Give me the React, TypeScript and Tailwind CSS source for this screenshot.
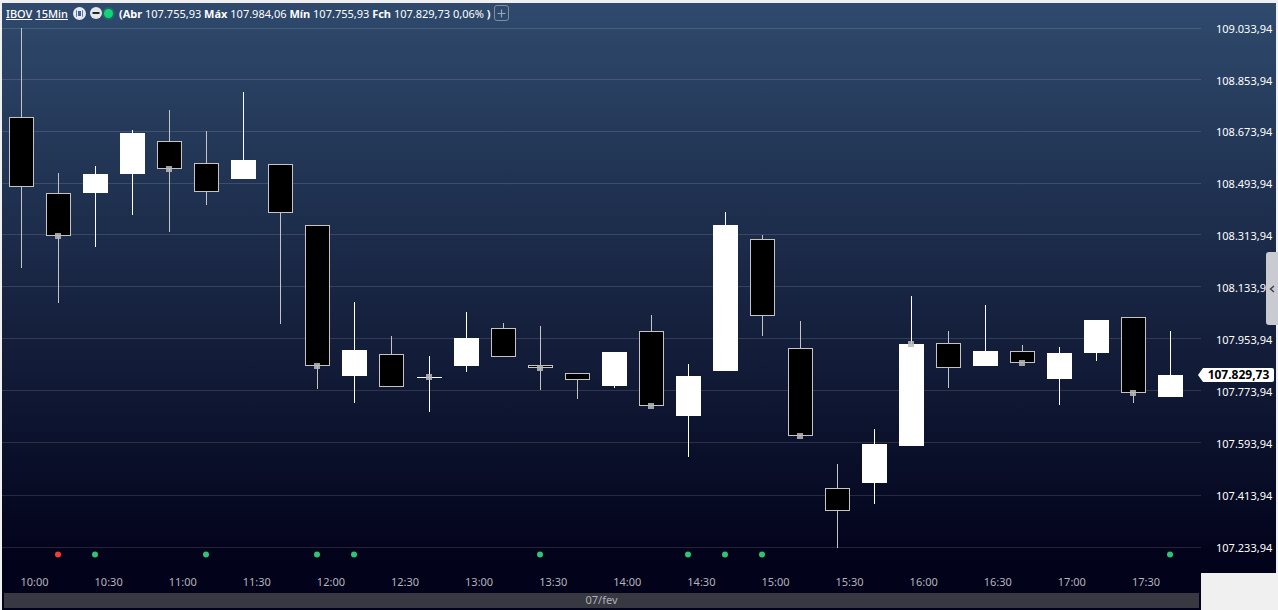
import { Fragment } from 'react'

const font = "font-['Noto_Sans',Arial,sans-serif]"
const chartBg =
  'bg-[linear-gradient(180deg,#2f4a6d_0%,#02021a_92%)] bg-size-[100%_607px] bg-no-repeat'

const priceLabels = [
  '109.033,94',
  '108.853,94',
  '108.673,94',
  '108.493,94',
  '108.313,94',
  '108.133,94',
  '107.953,94',
  '107.773,94',
  '107.593,94',
  '107.413,94',
  '107.233,94',
]

const timeLabels = [
  '10:00', '10:30', '11:00', '11:30', '12:00', '12:30', '13:00', '13:30',
  '14:00', '14:30', '15:00', '15:30', '16:00', '16:30', '17:00', '17:30',
]

const gridLines = [28, 79, 131, 183, 234, 286, 338, 390, 442, 495, 547]

type Candle = {
  x: number
  up: boolean
  top: number
  bottom: number
  high: number
  low: number
  mark?: number
}

// y values are page pixels, the svg viewBox starts at the chart's page offset
const candles: Candle[] = [
  { x: 21.5, up: false, top: 117.5, bottom: 186.5, high: 28, low: 268 },
  { x: 58.5, up: false, top: 193.5, bottom: 235.5, high: 173, low: 303, mark: 233 },
  { x: 95.5, up: true, top: 174, bottom: 193, high: 166, low: 247 },
  { x: 132.5, up: true, top: 133, bottom: 174, high: 130, low: 215 },
  { x: 169.5, up: false, top: 141.5, bottom: 168.5, high: 110, low: 232, mark: 166 },
  { x: 206.5, up: false, top: 163.5, bottom: 191.5, high: 131, low: 205 },
  { x: 243.5, up: true, top: 160, bottom: 179, high: 92, low: 179 },
  { x: 280.5, up: false, top: 164.5, bottom: 212.5, high: 164, low: 324 },
  { x: 317.5, up: false, top: 225.5, bottom: 365.5, high: 225, low: 389, mark: 363 },
  { x: 354.5, up: true, top: 350, bottom: 376, high: 302, low: 403 },
  { x: 391.5, up: false, top: 354.5, bottom: 386.5, high: 336, low: 386 },
  { x: 429.5, up: true, top: 377, bottom: 378, high: 356, low: 412, mark: 374 },
  { x: 466.5, up: true, top: 338, bottom: 366, high: 312, low: 372 },
  { x: 503.5, up: false, top: 328.5, bottom: 356.5, high: 323, low: 356 },
  { x: 540.5, up: false, top: 365.5, bottom: 367.5, high: 326, low: 390, mark: 365 },
  { x: 577.5, up: false, top: 373.5, bottom: 379.5, high: 373, low: 399 },
  { x: 614.5, up: true, top: 352, bottom: 386, high: 352, low: 388 },
  { x: 651.5, up: false, top: 331.5, bottom: 405.5, high: 315, low: 405, mark: 403 },
  { x: 688.5, up: true, top: 376, bottom: 416, high: 364, low: 457 },
  { x: 725.5, up: true, top: 225, bottom: 371, high: 212, low: 371 },
  { x: 762.5, up: false, top: 239.5, bottom: 315.5, high: 235, low: 336 },
  { x: 800.5, up: false, top: 348.5, bottom: 435.5, high: 321, low: 435, mark: 433 },
  { x: 837.5, up: false, top: 488.5, bottom: 510.5, high: 464, low: 548 },
  { x: 874.5, up: true, top: 444, bottom: 483, high: 429, low: 504 },
  { x: 911.5, up: true, top: 344, bottom: 446, high: 296, low: 446, mark: 341 },
  { x: 948.5, up: false, top: 343.5, bottom: 367.5, high: 331, low: 388 },
  { x: 985.5, up: true, top: 351, bottom: 366, high: 305, low: 366 },
  { x: 1022.5, up: false, top: 351.5, bottom: 362.5, high: 345, low: 362, mark: 360 },
  { x: 1059.5, up: true, top: 353, bottom: 379, high: 347, low: 405 },
  { x: 1096.5, up: true, top: 320, bottom: 353, high: 320, low: 361 },
  { x: 1133.5, up: false, top: 317.5, bottom: 392.5, high: 317, low: 403, mark: 390 },
  { x: 1170.5, up: true, top: 375, bottom: 397, high: 331, low: 397 },
]

const signals = [
  { x: 58, color: '#f23c3c' },
  { x: 95, color: '#2fc474' },
  { x: 206, color: '#2fc474' },
  { x: 317, color: '#2fc474' },
  { x: 354, color: '#2fc474' },
  { x: 540, color: '#2fc474' },
  { x: 688, color: '#2fc474' },
  { x: 725, color: '#2fc474' },
  { x: 762, color: '#2fc474' },
  { x: 1170, color: '#2fc474' },
]

function CandleChart() {
  return (
    <svg viewBox="2 3 1199 570" className="block h-[570px] w-[1199px]" shapeRendering="crispEdges">
      {gridLines.map((y) => (
        <rect key={y} x={2} y={y} width={1199} height={1} fill="#ffffff" fillOpacity={0.13} />
      ))}
      {candles.map((c) => (
        <Fragment key={c.x}>
          <rect
            x={c.x - 0.5}
            y={c.high}
            width={1}
            height={c.low - c.high}
            fill={c.up ? '#ffffff' : '#c4c4c4'}
          />
          {c.up ? (
            <rect x={c.x - 12.5} y={c.top} width={25} height={c.bottom - c.top} fill="#ffffff" />
          ) : (
            <rect
              x={c.x - 12}
              y={c.top}
              width={24}
              height={c.bottom - c.top}
              fill="#000000"
              stroke="#c4c4c4"
            />
          )}
          {c.mark !== undefined && (
            <rect x={c.x - 3.5} y={c.mark} width={6} height={6} fill="#bbbbbb" fillOpacity={0.85} />
          )}
        </Fragment>
      ))}
      {signals.map((s) => (
        <circle key={s.x} cx={s.x} cy={554.5} r={3} fill={s.color} shapeRendering="auto" />
      ))}
    </svg>
  )
}

function ChartHeader() {
  return (
    <div className="absolute left-[4px] top-0 flex h-[20px] items-center text-[11px] leading-none text-white">
      <span className="font-medium underline">IBOV</span>
      <span className="ml-[3px] font-medium underline">15Min</span>
      <svg viewBox="0 0 13 13" className="ml-[5px] h-[13px] w-[13px]">
        <circle cx="6.5" cy="6.5" r="6.5" fill="#e6e9ee" />
        <path d="M4 3.5h-.5v6H4M9 3.5h.5v6H9" fill="none" stroke="#5d7ba5" />
        <rect x="5" y="4" width="3" height="5" fill="#3e6396" />
      </svg>
      <svg viewBox="0 0 12 12" className="ml-[4px] h-[12px] w-[12px]">
        <circle cx="6" cy="6" r="6" fill="#e4e6ea" />
        <rect x="2.5" y="5" width="7" height="2" fill="#1d2533" />
      </svg>
      <svg viewBox="0 0 13 13" className="h-[13px] w-[13px]">
        <circle cx="6.5" cy="6.5" r="6.5" fill="#1f6a63" />
        <circle cx="6.5" cy="6.5" r="4.5" fill="#12d47c" />
      </svg>
      <span className="ml-[4px] whitespace-nowrap">
        <b>(Abr</b> 107.755,93 <b>Máx</b> 107.984,06 <b>Mín</b> 107.755,93 <b>Fch</b> 107.829,73
        0,06% <b>)</b>
      </span>
      <span className="ml-[3px] flex h-[16px] w-[15px] items-center justify-center rounded-[3px] border border-[#7f8fa3]">
        <svg viewBox="0 0 9 9" className="h-[9px] w-[9px]">
          <path d="M4.5 0.5v8M0.5 4.5h8" stroke="#9aa7b7" strokeWidth="1.2" />
        </svg>
      </span>
    </div>
  )
}

export default function App() {
  return (
    <div className={`flex h-[610px] w-[1278px] overflow-hidden bg-[#f0f0f0] pl-[2px] pt-[3px] ${font}`}>
      <div className={`h-[607px] w-[1199px] shrink-0 ${chartBg}`}>
        <div className="relative h-[570px]">
          <CandleChart />
          <ChartHeader />
        </div>
        <div className="ml-[-4.5px] flex h-[19px] items-center text-[11px] text-[#b4b4bc]">
          {timeLabels.map((t) => (
            <span key={t} className="w-[74.1px] shrink-0 text-center">
              {t}
            </span>
          ))}
        </div>
        <div className="mx-[2px] mt-[1px] flex h-[15px] items-center justify-center bg-[#383842] text-[11px] text-[#b0b0b6]">
          07/fev
        </div>
      </div>

      <div className={`relative h-[570px] w-[75px] shrink-0 pl-[15px] text-[11px] text-white ${chartBg}`}>
        {priceLabels.map((p) => (
          <div key={p} className="flex h-[51.9px] items-center">
            {p}
          </div>
        ))}

        <div className="absolute left-[-3px] top-[365px] flex h-[14px] items-center">
          <span className="h-0 w-0 border-y-[7px] border-r-[5px] border-y-transparent border-r-white" />
          <span className="flex h-[14px] w-[71px] items-center justify-center rounded-r-[2px] bg-white text-[12px] font-bold text-black">
            107.829,73
          </span>
        </div>
      </div>

      <div className="absolute left-[1266px] top-[252px] flex h-[73px] w-[12px] items-center justify-center rounded-l-[3px] bg-[#c9cbd0]">
        <svg viewBox="0 0 6 8" className="h-[8px] w-[6px]">
          <path d="M5 1 1.5 4 5 7" fill="none" stroke="#3a3f4a" strokeWidth="1.4" />
        </svg>
      </div>
    </div>
  )
}
